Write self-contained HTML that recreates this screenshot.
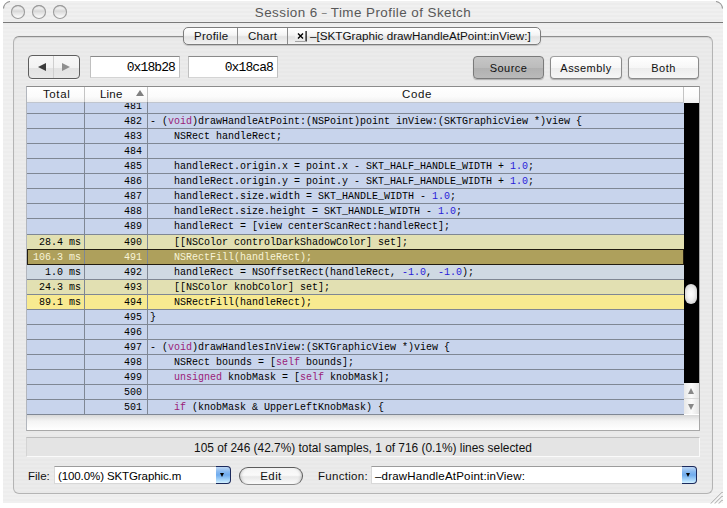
<!DOCTYPE html>
<html><head><meta charset="utf-8">
<style>
*{box-sizing:border-box;margin:0;padding:0}
html,body{width:727px;height:508px;overflow:hidden;background:#fff;position:relative}
body{font-family:"Liberation Sans",sans-serif;color:#000}
.a{position:absolute}
#win{position:absolute;left:3px;top:1px;width:720px;height:502px;border-radius:8px 8px 0 0;
 background:repeating-linear-gradient(to bottom,#f0f0f0 0px,#f0f0f0 2px,#ededed 2px,#ededed 4px);overflow:hidden}
#titlebar{position:absolute;left:0;top:0;width:720px;height:21px;
 background:repeating-linear-gradient(to bottom,#f0f0f0 0px,#f0f0f0 2px,#ececec 2px,#ececec 4px)}
#title{position:absolute;left:0;width:720px;top:4px;text-align:center;font-size:13.4px;letter-spacing:0.45px;color:#585858;line-height:16px}
#tsep{position:absolute;left:0;top:21px;width:720px;height:1px;background:#7a7a7a}
.tl{position:absolute;top:4px;width:14px;height:14px;border-radius:50%;
 background:linear-gradient(to bottom,#e4e4e4 0%,#ececec 25%,#d8d8d8 45%,#e6e6e6 60%,#f8f8f8 85%,#ffffff 100%);
 box-shadow:inset 0 0 0 1px #9a9a9a,inset 0 1px 1px rgba(0,0,0,.3)}
#panel{position:absolute;left:13px;top:36px;width:700px;height:458px;border-radius:6px;
 border:1px solid #b4b4b4;border-top-color:#8e8e8e;box-shadow:inset 0 1px 1px rgba(0,0,0,.10);
 background:repeating-linear-gradient(to bottom,#ebebeb 0px,#ebebeb 2px,#e8e8e8 2px,#e8e8e8 4px)}
#tabs{position:absolute;left:183px;top:27px;width:358px;height:18px;border-radius:5px;border:1px solid #7c7c7c;
 background:linear-gradient(to bottom,#ffffff 0%,#f4f4f4 45%,#e2e2e2 55%,#f2f2f2 100%);
 box-shadow:0 1px 1px rgba(0,0,0,.18);font-size:11.5px;line-height:16px;color:#111}
.tdiv{position:absolute;top:0;width:1px;height:16px;background:#8c8c8c}
.btn{position:absolute;height:23px;border-radius:4px;border:1px solid #8a8a8a;border-top-color:#a0a0a0;
 background:linear-gradient(to bottom,#ffffff 0%,#f7f7f7 50%,#ececec 51%,#f6f6f6 100%);
 box-shadow:0 1px 1px rgba(0,0,0,.25);font-size:11px;line-height:23px;text-align:center;color:#111;letter-spacing:0.45px}
.btn.pressed{background:linear-gradient(to bottom,#c6c6c6 0%,#bcbcbc 50%,#b0b0b0 51%,#bababa 100%);border-color:#7a7a7a}
.field{position:absolute;height:22px;background:#fff;border:1px solid #c0c0c0;border-top-color:#8a8a8a;border-bottom-color:#d4d4d4;
 font-family:"Liberation Mono",monospace;font-size:13px;letter-spacing:-0.9px;line-height:19px;padding-top:1px;text-align:right;padding-right:4px;color:#000}
#table{position:absolute;left:26px;top:86px;width:674px;height:345px;border:1px solid #a8a8a8;border-left-color:#b2b6bd;border-top-color:#8c8c8c;background:#fff;overflow:hidden}
#hdr{position:absolute;left:27px;top:87px;width:672px;height:16px;
 background:linear-gradient(to bottom,#ffffff 0%,#fbfbfb 60%,#efefef 100%);font-size:11.5px;line-height:15px;color:#111;letter-spacing:0.6px}
.hdiv{position:absolute;top:87px;width:1px;height:16px;background:#c4c4c4}
#rows{position:absolute;left:27px;top:102px;width:657px;height:313px;overflow:hidden;background:#c8d4ec}
.row{position:absolute;left:0;width:657px;background:#c8d4ec;font-family:"Liberation Mono",monospace;font-size:10px;color:#000}
.row>div{position:absolute;top:0;bottom:0;display:flex;align-items:center;white-space:pre}
.ct{left:0;width:54px;justify-content:flex-end}
.cl{left:58px;width:57px;justify-content:flex-end}
.cc{left:123px;width:530px}
.hl{position:absolute;left:0;width:657px;height:1px;background:#7f8794}
.vl{position:absolute;width:1px;background:#7f8794}
.k1{background:#e2e0b2}
.k2{background:#cfd9e3}
.k3{background:#f8ea90}
.sel{background:#aea05c;color:#f8f4d8}
.kw{color:#9a1c78}
.nu{color:#2a1cd8}
#track{position:absolute;left:684px;top:103px;width:15px;height:280px;background:#000}
#knob{position:absolute;left:685px;top:284px;width:12px;height:20px;border-radius:6px;
 background:radial-gradient(ellipse at 50% 50%,#ffffff 0,#f2f2f2 40%,#d4d4d4 75%,#a0a0a0 100%)}
#arrows{position:absolute;left:684px;top:383px;width:15px;height:31px;
 background:linear-gradient(to right,#e8e8e8,#fafafa 50%,#e4e4e4)}
#status{position:absolute;left:26px;top:437px;width:674px;height:20px;background:#e4e4e4;border-top:1px solid #bdbdbd;border-bottom:1px solid #fafafa;border-right:1px solid #fafafa;border-left:1px solid #d4d4d4;
 font-size:11.9px;line-height:20px;text-align:center;color:#111}
.lbl{position:absolute;font-size:11.5px;color:#111;line-height:14px;letter-spacing:0.4px}
.popup{position:absolute;height:18px;background:#fff;border:1px solid #d8d8d8;border-top-color:#9c9c9c;border-right:none;font-size:11.5px;line-height:19px;padding-left:3px;letter-spacing:-0.1px;color:#000;white-space:nowrap}
.parr{position:absolute;width:15px;height:18px;border-radius:0 4px 4px 0;border:1px solid #1c2a5c;border-left:none;
 background:linear-gradient(to bottom,#bcd6f4 0%,#86b8f0 30%,#70acee 50%,#a6d4fa 80%,#d4f2ff 100%)}
.parr:after{content:"";position:absolute;left:4px;top:6px;border-left:2.5px solid transparent;border-right:2.5px solid transparent;border-top:4px solid #000}
#edit{position:absolute;left:239px;top:467px;width:64px;height:18px;border-radius:9px;border:1px solid #5c5c5c;border-bottom-color:#8a8a8a;
 background:linear-gradient(to bottom,#f4f4f4 0%,#fafafa 45%,#e8e8e8 55%,#fcfcfc 100%);box-shadow:inset 3px 0 3px -2px rgba(0,0,0,.18),inset -3px 0 3px -2px rgba(0,0,0,.18);font-size:11.5px;line-height:16px;text-align:center;color:#111;letter-spacing:0.4px}
</style></head><body>
<div id="win">
 <div id="titlebar"></div>
 <div id="title">Session 6 <span style="font-size:9px;letter-spacing:0;position:relative;top:-1.5px">–</span> Time Profile of Sketch</div>
 <div id="tsep"></div>
 <div class="tl" style="left:8px"></div>
 <div class="tl" style="left:29px"></div>
 <div class="tl" style="left:50px"></div>
</div>
<svg class="a" style="left:0;top:0" width="20" height="20"><path d="M3.5 8.5 A7.5 7.5 0 0 1 10 1.5" stroke="#8c8c8c" stroke-width="1.1" fill="none"/></svg>
<svg class="a" style="left:707px;top:0" width="20" height="20"><path d="M9 1.5 A7.5 7.5 0 0 1 15.5 8.5" stroke="#929292" stroke-width="1.1" fill="none"/></svg>
<div id="panel"></div>
<div id="tabs">
 <div class="a" style="left:10px;top:0;letter-spacing:0.25px">Profile</div>
 <div class="tdiv" style="left:53px"></div>
 <div class="a" style="left:64px;top:0;letter-spacing:0.2px">Chart</div>
 <div class="tdiv" style="left:103px"></div>
 <svg class="a" style="left:111px;top:3px" width="13" height="12" viewBox="0 0 13 12">
<defs><linearGradient id="xg" x1="0" y1="0" x2="0" y2="1"><stop offset="0" stop-color="#ffffff"/><stop offset="1" stop-color="#e4e4e4"/></linearGradient></defs>
<rect x="0" y="0" width="10" height="11" fill="url(#xg)"/><rect x="0" y="10" width="10" height="1" fill="#a4a4a4"/>
<path d="M3 2.5 L8 7.5 M8 2.5 L3 7.5" stroke="#000" stroke-width="1.4" fill="none"/>
<rect x="10.5" y="0" width="1.2" height="10.5" fill="#000"/>
</svg>
 <div class="a" style="left:126px;top:0;white-space:nowrap;font-size:11.7px">–[SKTGraphic drawHandleAtPoint:inView:]</div>
</div>

<div class="a" style="left:28px;top:55px;width:52px;height:24px;border-radius:4px;border:1px solid #5e5e5e;background:linear-gradient(to bottom,#f7f7f7 0%,#f2f2f2 54%,#e3e3e3 56%,#e8e8e8 100%);box-shadow:0 1px 0 rgba(255,255,255,.6)"></div>
<div class="a" style="left:53px;top:56px;width:1px;height:22px;background:#cfcfcf"></div>
<div class="a" style="left:38px;top:63px;width:0;height:0;border-top:4.5px solid transparent;border-bottom:4.5px solid transparent;border-right:8.5px solid #3a3a3a"></div>
<div class="a" style="left:62px;top:63px;width:0;height:0;border-top:4.5px solid transparent;border-bottom:4.5px solid transparent;border-left:8.5px solid #8e8e8e"></div>

<div class="field" style="left:90px;top:56px;width:90px">0x18b28</div>
<div class="field" style="left:188px;top:56px;width:90px">0x18ca8</div>

<div class="btn pressed" style="left:473px;top:56px;width:71px">Source</div>
<div class="btn" style="left:550px;top:56px;width:72px">Assembly</div>
<div class="btn" style="left:628px;top:56px;width:71px">Both</div>

<div id="table"></div>
<div id="hdr">
 <div class="a" style="left:16px;top:0">Total</div>
 <div class="a" style="left:73px;top:0;letter-spacing:0.2px">Line</div>
 <div class="a" style="left:109px;top:2.5px;width:0;height:0;border-left:4px solid transparent;border-right:4px solid transparent;border-bottom:6.5px solid #808080"></div>
 <div class="a" style="left:375px;top:0">Code</div>
</div>
<div class="hdiv" style="left:84px"></div>
<div class="hdiv" style="left:147px"></div>
<div class="hdiv" style="left:683px"></div>
<div id="rows">
<div class="row" style="top:-3px;height:14px"><div class="ct"></div><div class="cl">481</div><div class="cc"><span></span></div></div><div class="hl" style="top:11px"></div>
<div class="row" style="top:12px;height:14px"><div class="ct"></div><div class="cl">482</div><div class="cc"><span>- (<span class="kw">void</span>)drawHandleAtPoint:(NSPoint)point inView:(SKTGraphicView *)view {</span></div></div><div class="hl" style="top:26px"></div>
<div class="row" style="top:27px;height:14px"><div class="ct"></div><div class="cl">483</div><div class="cc"><span>    NSRect handleRect;</span></div></div><div class="hl" style="top:41px"></div>
<div class="row" style="top:42px;height:14px"><div class="ct"></div><div class="cl">484</div><div class="cc"><span></span></div></div><div class="hl" style="top:56px"></div>
<div class="row" style="top:57px;height:14px"><div class="ct"></div><div class="cl">485</div><div class="cc"><span>    handleRect.origin.x = point.x - SKT_HALF_HANDLE_WIDTH + <span class="nu">1.0</span>;</span></div></div><div class="hl" style="top:71px"></div>
<div class="row" style="top:72px;height:14px"><div class="ct"></div><div class="cl">486</div><div class="cc"><span>    handleRect.origin.y = point.y - SKT_HALF_HANDLE_WIDTH + <span class="nu">1.0</span>;</span></div></div><div class="hl" style="top:86px"></div>
<div class="row" style="top:87px;height:14px"><div class="ct"></div><div class="cl">487</div><div class="cc"><span>    handleRect.size.width = SKT_HANDLE_WIDTH - <span class="nu">1.0</span>;</span></div></div><div class="hl" style="top:101px"></div>
<div class="row" style="top:102px;height:14px"><div class="ct"></div><div class="cl">488</div><div class="cc"><span>    handleRect.size.height = SKT_HANDLE_WIDTH - <span class="nu">1.0</span>;</span></div></div><div class="hl" style="top:116px"></div>
<div class="row" style="top:117px;height:15px"><div class="ct"></div><div class="cl">489</div><div class="cc"><span>    handleRect = [view centerScanRect:handleRect];</span></div></div><div class="hl" style="top:132px"></div>
<div class="row k1" style="top:133px;height:14px"><div class="ct">28.4 ms</div><div class="cl">490</div><div class="cc"><span>    [[NSColor controlDarkShadowColor] set];</span></div></div><div class="hl" style="top:147px"></div>
<div class="row sel" style="top:148px;height:14px"><div class="ct">106.3 ms</div><div class="cl">491</div><div class="cc"><span>    NSRectFill(handleRect);</span></div></div><div class="hl" style="top:162px"></div>
<div class="row k2" style="top:163px;height:14px"><div class="ct">1.0 ms</div><div class="cl">492</div><div class="cc"><span>    handleRect = NSOffsetRect(handleRect, <span class="nu">-1.0</span>, <span class="nu">-1.0</span>);</span></div></div><div class="hl" style="top:177px"></div>
<div class="row k1" style="top:178px;height:14px"><div class="ct">24.3 ms</div><div class="cl">493</div><div class="cc"><span>    [[NSColor knobColor] set];</span></div></div><div class="hl" style="top:192px"></div>
<div class="row k3" style="top:193px;height:14px"><div class="ct">89.1 ms</div><div class="cl">494</div><div class="cc"><span>    NSRectFill(handleRect);</span></div></div><div class="hl" style="top:207px"></div>
<div class="row" style="top:208px;height:14px"><div class="ct"></div><div class="cl">495</div><div class="cc"><span>}</span></div></div><div class="hl" style="top:222px"></div>
<div class="row" style="top:223px;height:14px"><div class="ct"></div><div class="cl">496</div><div class="cc"><span></span></div></div><div class="hl" style="top:237px"></div>
<div class="row" style="top:238px;height:14px"><div class="ct"></div><div class="cl">497</div><div class="cc"><span>- (<span class="kw">void</span>)drawHandlesInView:(SKTGraphicView *)view {</span></div></div><div class="hl" style="top:252px"></div>
<div class="row" style="top:253px;height:14px"><div class="ct"></div><div class="cl">498</div><div class="cc"><span>    NSRect bounds = [<span class="kw">self</span> bounds];</span></div></div><div class="hl" style="top:267px"></div>
<div class="row" style="top:268px;height:14px"><div class="ct"></div><div class="cl">499</div><div class="cc"><span>    <span class="kw">unsigned</span> knobMask = [<span class="kw">self</span> knobMask];</span></div></div><div class="hl" style="top:282px"></div>
<div class="row" style="top:283px;height:14px"><div class="ct"></div><div class="cl">500</div><div class="cc"><span></span></div></div><div class="hl" style="top:297px"></div>
<div class="row" style="top:298px;height:14px"><div class="ct"></div><div class="cl">501</div><div class="cc"><span>    <span class="kw">if</span> (knobMask &amp; UpperLeftKnobMask) {</span></div></div><div class="hl" style="top:312px"></div>
</div>
<div class="a" style="left:27px;top:102px;width:657px;height:1px;background:#c0c5ce"></div>
<div class="vl" style="left:84px;top:102px;height:312px"></div>
<div class="vl" style="left:147px;top:102px;height:312px"></div>
<div class="a" style="left:27px;top:249px;width:657px;height:16px;border:1px solid #221c10"></div>
<div id="track"></div>
<div id="knob"></div>
<div id="arrows">
 <div class="a" style="left:4px;top:5px;width:0;height:0;border-left:3.5px solid transparent;border-right:3.5px solid transparent;border-bottom:6px solid #888"></div>
 <div class="a" style="left:0;top:15px;width:15px;height:1px;background:#d8d8d8"></div>
 <div class="a" style="left:4px;top:21px;width:0;height:0;border-left:3.5px solid transparent;border-right:3.5px solid transparent;border-top:6px solid #888"></div>
</div>
<div class="a" style="left:27px;top:415px;width:672px;height:15px;background:linear-gradient(to bottom,#d8d8d8 0,#f4f4f4 40%,#fff 100%)"></div>

<div id="status">105 of 246 (42.7%) total samples, 1 of 716 (0.1%) lines selected</div>

<div class="lbl" style="left:28px;top:469px;letter-spacing:0">File:</div>
<div class="popup" style="left:54px;top:466px;width:163px">(100.0%) SKTGraphic.m</div>
<div class="parr" style="left:216px;top:466px"></div>
<div id="edit">Edit</div>
<div class="lbl" style="left:318px;top:469px;letter-spacing:0.3px">Function:</div>
<div class="popup" style="left:371px;top:466px;width:312px;letter-spacing:0.2px">–drawHandleAtPoint:inView:</div>
<div class="parr" style="left:682px;top:466px"></div>
<svg class="a" style="left:704px;top:489px" width="19" height="15" viewBox="0 0 19 15"><g stroke-width="1">
<line x1="7" y1="14.5" x2="18.5" y2="3" stroke="#8c8c8c"/><line x1="8" y1="14.5" x2="18.5" y2="4" stroke="#fff"/>
<line x1="11" y1="14.5" x2="18.5" y2="7" stroke="#8c8c8c"/><line x1="12" y1="14.5" x2="18.5" y2="8" stroke="#fff"/>
<line x1="15" y1="14.5" x2="18.5" y2="11" stroke="#8c8c8c"/><line x1="16" y1="14.5" x2="18.5" y2="12" stroke="#fff"/>
</g></svg>
</body></html>
